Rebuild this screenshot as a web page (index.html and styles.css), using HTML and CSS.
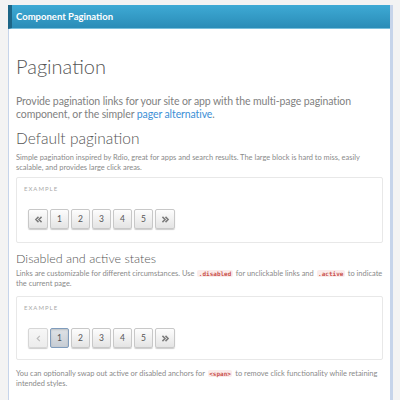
FILE: index.html
```html
<!DOCTYPE html>
<html>
<head>
<meta charset="utf-8">
<link rel="stylesheet" href="styles.css">
</head>
<body>
<div class="panel">
  <div class="panel-head">Component Pagination</div>
  <div class="panel-body">
    <h1 class="title">Pagination</h1>
    <p class="lead">Provide pagination links for your site or app with the multi-page pagination component, or the simpler <a class="link" href="#">pager alternative</a>.</p>
    <h2 class="section">Default pagination</h2>
    <p class="note">Simple pagination inspired by Rdio, great for apps and search results. The large block is hard to miss, easily scalable, and provides large click areas.</p>
    <div class="example">
      <div class="example-label">EXAMPLE</div>
      <div class="pager">
        <span class="pg arrow"><svg class="chev" viewBox="0 0 10 8"><path d="M5 1 L2 4 L5 7 M8.5 1 L5.5 4 L8.5 7"/></svg></span>
        <span class="pg">1</span>
        <span class="pg">2</span>
        <span class="pg">3</span>
        <span class="pg">4</span>
        <span class="pg">5</span>
        <span class="pg arrow"><svg class="chev" viewBox="0 0 10 8"><path d="M1.5 1 L4.5 4 L1.5 7 M5 1 L8 4 L5 7"/></svg></span>
      </div>
    </div>
    <h3 class="subsection">Disabled and active states</h3>
    <p class="note">Links are customizable for different circumstances. Use <code class="code">.disabled</code> for unclickable links and <code class="code">.active</code> to indicate the current page.</p>
    <div class="example example-2">
      <div class="example-label">EXAMPLE</div>
      <div class="pager">
        <span class="pg arrow disabled"><svg class="chev" viewBox="0 0 10 8"><path d="M6.5 1 L3.5 4 L6.5 7"/></svg></span>
        <span class="pg active">1</span>
        <span class="pg">2</span>
        <span class="pg">3</span>
        <span class="pg">4</span>
        <span class="pg">5</span>
        <span class="pg arrow"><svg class="chev" viewBox="0 0 10 8"><path d="M1.5 1 L4.5 4 L1.5 7 M5 1 L8 4 L5 7"/></svg></span>
      </div>
    </div>
    <p class="note after">You can optionally swap out active or disabled anchors for <code class="code">&lt;span&gt;</code> to remove click functionality while retaining intended styles.</p>
  </div>
</div>
</body>
</html>
```
FILE: styles.css
```css
html, body {
  margin: 0;
  height: 100%;
  overflow: hidden;
}
body {
  background: #f3f3f3;
  padding: 5px 7px 0 8px;
  font-family: Lato, "Noto Sans", sans-serif;
  color: #666;
}
.panel {
  background: #fff;
  border-left: 1px solid #c6d4ea;
  border-right: 3px solid #c6d4ea;
  min-height: 420px;
}
.panel-head {
  height: 23px;
  line-height: 23px;
  background: linear-gradient(#3eaad5, #2a8cb7);
  border-left: 4px solid #1d6687;
  border-bottom: 1px solid #79bfdc;
  margin-left: -1px;
  color: #fff;
  font-weight: 700;
  font-size: 9.5px;
  padding-left: 4px;
}
.panel-body {
  padding: 0 7px 0 7px;
}
.title {
  margin: 25px 0 0;
  font-size: 20px;
  line-height: 24px;
  font-weight: 300;
  color: #555;
}
.lead {
  margin: 17px 0 0;
  font-size: 10.5px;
  line-height: 12.7px;
  letter-spacing: -0.1px;
  color: #818181;
}
.link {
  color: #3d8fd6;
  text-decoration: none;
}
.section {
  margin: 8.5px 0 0;
  font-size: 15.5px;
  line-height: 18.6px;
  font-weight: 300;
  color: #555;
}
.note {
  margin: 5.5px 0 0;
  font-size: 7.45px;
  line-height: 10px;
  color: #8a8a8a;
}
.example {
  box-sizing: border-box;
  margin-top: 4px;
  border: 1px solid #e8e8e8;
  border-radius: 2px;
  height: 66px;
  padding: 7px 7px 0;
}
.example-label {
  font-size: 6px;
  line-height: 8px;
  letter-spacing: 1px;
  color: #aaa;
}
.pager {
  margin-top: 16px;
  margin-left: 4px;
  display: flex;
  gap: 2px;
}
.pg {
  width: 17px;
  height: 18px;
  border: 1px solid #c8c8c8;
  border-radius: 2px;
  background: linear-gradient(#fdfdfd, #e4e4e4);
  box-shadow: 0 1px 1px rgba(0, 0, 0, 0.2);
  display: flex;
  align-items: center;
  justify-content: center;
  font-size: 8.5px;
  color: #555;
}
.arrow {
  width: 18px;
}
.chev {
  width: 9px;
  height: 7px;
  fill: none;
  stroke: #7a7a7a;
  stroke-width: 1.7;
}
.disabled {
  background: linear-gradient(#f7f7f7, #ececec);
  border-color: #d6d6d6;
}
.disabled .chev {
  stroke: #bbb;
  stroke-width: 1.3;
}
.active {
  background: linear-gradient(#dfe3e7, #c7cdd4);
  border-color: #809cbc;
  box-shadow: inset 0 1px 2px rgba(0, 0, 0, 0.15);
  color: #555;
}
.subsection {
  margin: 8px 0 0;
  font-size: 12.5px;
  line-height: 15px;
  font-weight: 300;
  color: #555;
}
.subsection + .note {
  margin-top: 2.6px;
}
.example-2 {
  margin-top: 7.5px;
  height: 64px;
}
.code {
  font-family: "DejaVu Sans Mono", monospace;
  font-size: 6px;
  font-weight: 700;
  color: #c9524e;
  background: #fbeceb;
  border-radius: 2px;
  padding: 0 1.5px;
  margin: 0 1px;
  line-height: 8px;
}
.after {
  margin-top: 8.5px;
}
```
